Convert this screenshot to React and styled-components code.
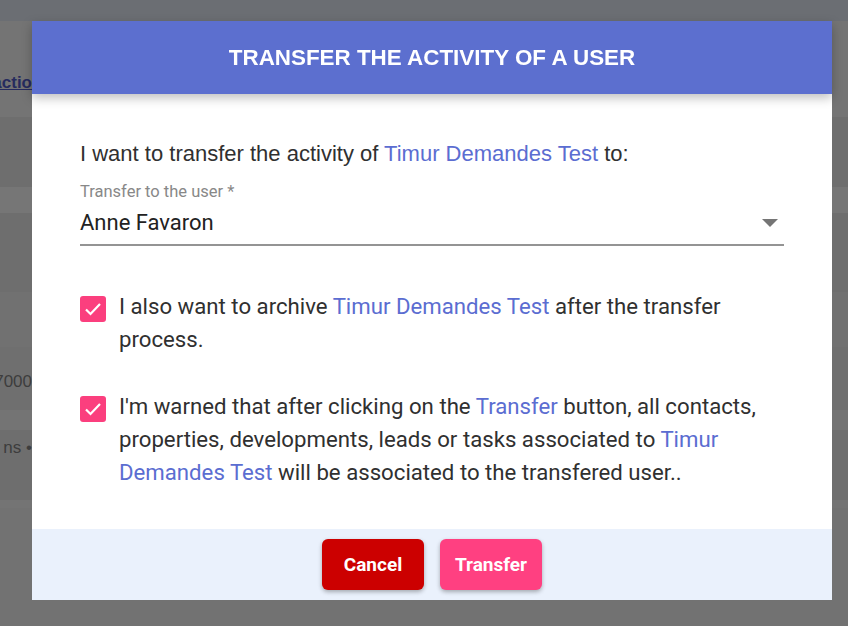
import React from 'react'
import styled, { createGlobalStyle } from 'styled-components'

const Global = createGlobalStyle`
	html, body {
		margin: 0;
		padding: 0;
	}
	body {
		width: 848px;
		height: 626px;
		overflow: hidden;
		background: #727272;
		font-family: Roboto, "Liberation Sans", sans-serif;
	}
`

const Page = styled.div`
	display: flex;
	flex-direction: column;
`

const TopBar = styled.div`
	height: 21px;
	background: #6b6e73;
`

const Row = styled.div`
	height: ${p => p.h}px;
	background: ${p => p.bg};
	display: flex;
	align-items: flex-start;
	overflow: hidden;
`

const RowText = styled.span`
	flex: none;
	width: 32px;
	margin-top: ${p => p.top}px;
	display: flex;
	justify-content: flex-end;
	white-space: nowrap;
	overflow: hidden;
	color: #3d3d3d;
	font-family: "Liberation Sans", sans-serif;
	font-size: 17px;
	line-height: 20px;
	${p => p.link && `
		color: #262b5e;
		font-weight: 700;
		text-decoration: underline;
	`}
`

const Modal = styled.div`
	position: fixed;
	left: 32px;
	top: 21px;
	width: 800px;
	height: 579px;
	background: #fff;
	display: flex;
	flex-direction: column;
`

const Header = styled.header`
	height: 73px;
	flex: none;
	background: #5c6fcf;
	display: flex;
	align-items: center;
	justify-content: center;
	box-shadow: 0 4px 10px rgba(0, 0, 0, 0.25);
	position: relative;
	z-index: 1;
`

const Title = styled.h2`
	margin: 0;
	color: #fff;
	font-family: "Liberation Sans", Arial, sans-serif;
	font-weight: 700;
	font-size: 22.4px;
`

const Body = styled.div`
	flex: 1;
	padding: 48px 48px 0 48px;
`

const Intro = styled.p`
	margin: 0;
	font-family: "Liberation Sans", Arial, sans-serif;
	font-size: 22px;
	line-height: 24px;
	color: #303030;
`

const Highlight = styled.span`
	color: #5b6dd1;
`

const Field = styled.div`
	margin-top: 17px;
	border-bottom: 2px solid #949494;
`

const Label = styled.div`
	font-size: 16.5px;
	line-height: 18px;
	color: #888;
`

const SelectValue = styled.div`
	display: flex;
	align-items: center;
	justify-content: space-between;
	height: 43px;
	font-size: 22px;
	color: #222;
	padding-right: 6px;
`

const Option = styled.div`
	display: flex;
	gap: 13px;
	align-items: flex-start;
	margin-top: ${p => p.top}px;
`

const Box = styled.span`
	flex: none;
	width: 26px;
	height: 26px;
	margin-top: 6px;
	border-radius: 3px;
	background: #fb3f7e;
	display: flex;
	align-items: center;
	justify-content: center;
`

const OptionText = styled.div`
	flex: 1;
	font-size: 22.2px;
	line-height: 33px;
	color: #303030;
`

const Footer = styled.footer`
	height: 71px;
	flex: none;
	background: #eaf1fc;
	display: flex;
	align-items: center;
	justify-content: center;
	gap: 16px;
`

const Button = styled.button`
	width: 102px;
	height: 51px;
	border: none;
	border-radius: 6px;
	background: ${p => p.bg};
	color: #fff;
	font-family: Roboto, sans-serif;
	font-weight: 700;
	font-size: 19px;
	box-shadow: 0 2px 4px rgba(0, 0, 0, 0.3);
	cursor: pointer;
`

const Check = () => (
	<svg width="18" height="14" viewBox="0 0 18 14">
		<path d="M2 7.5 L6.5 12 L16 2" fill="none" stroke="#fff" strokeWidth="2.2" />
	</svg>
)

const Arrow = () => (
	<svg width="16" height="8" viewBox="0 0 16 8">
		<polygon points="0,0 16,0 8,8" fill="#757575" />
	</svg>
)

const rows = [
	{ h: 96, bg: '#747474', text: 'Transactio', link: true, top: 52 },
	{ h: 70, bg: '#6e6e6e' },
	{ h: 26, bg: '#767676' },
	{ h: 79, bg: '#6e6e6e' },
	{ h: 55, bg: '#717171' },
	{ h: 63, bg: '#6f6f6f', text: '7000', top: 25 },
	{ h: 20, bg: '#747474' },
	{ h: 70, bg: '#6e6e6e', text: 'ns •', top: 8 },
	{ h: 8, bg: '#747474' },
	{ h: 118, bg: '#727272' },
]

export default () => (
	<>
		<Global />
		<Page>
			<TopBar />
			{rows.map((r, i) => (
				<Row key={i} h={r.h} bg={r.bg}>
					{r.text && <RowText link={r.link} top={r.top}>{r.text}</RowText>}
				</Row>
			))}
		</Page>
		<Modal>
			<Header>
				<Title>TRANSFER THE ACTIVITY OF A USER</Title>
			</Header>
			<Body>
				<Intro>
					I want to transfer the activity of <Highlight>Timur Demandes Test</Highlight> to:
				</Intro>
				<Field>
					<Label>Transfer to the user *</Label>
					<SelectValue>
						<span>Anne Favaron</span>
						<Arrow />
					</SelectValue>
				</Field>
				<Option top={44}>
					<Box><Check /></Box>
					<OptionText>
						I also want to archive <Highlight>Timur Demandes Test</Highlight> after the transfer process.
					</OptionText>
				</Option>
				<Option top={34}>
					<Box><Check /></Box>
					<OptionText>
						I'm warned that after clicking on the <Highlight>Transfer</Highlight> button, all contacts,
						properties, developments, leads or tasks associated to <Highlight>Timur Demandes Test</Highlight> will
						be associated to the transfered user..
					</OptionText>
				</Option>
			</Body>
			<Footer>
				<Button bg="#cc0000">Cancel</Button>
				<Button bg="#ff4081">Transfer</Button>
			</Footer>
		</Modal>
	</>
)
